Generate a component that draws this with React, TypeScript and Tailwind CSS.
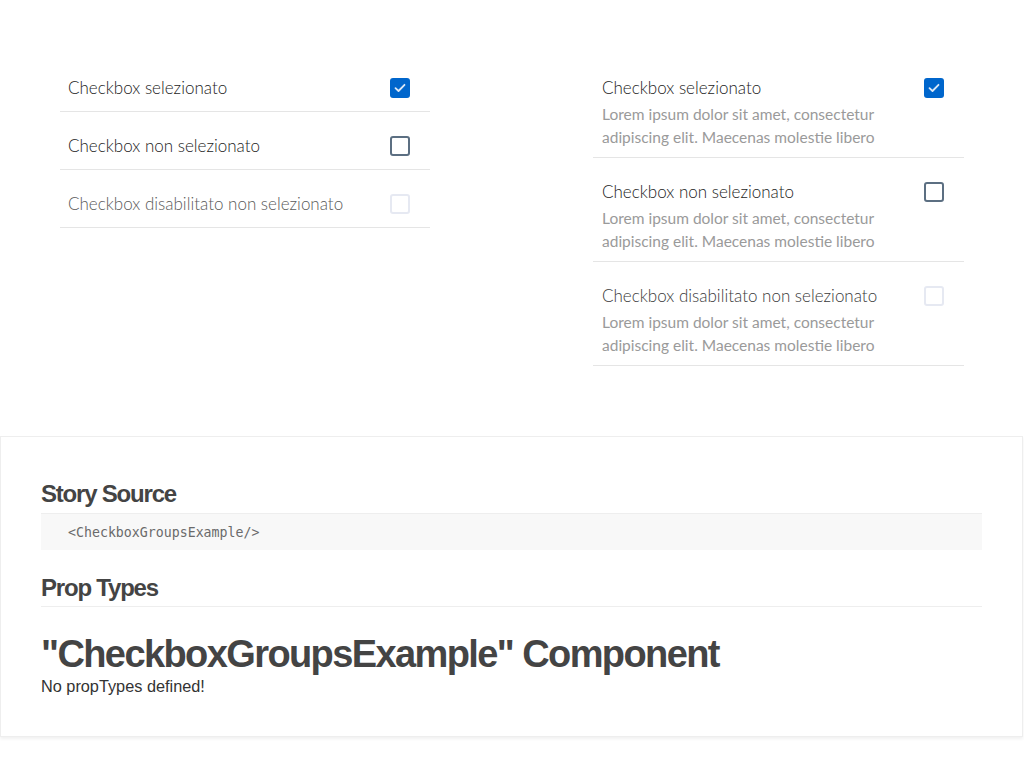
import React from "react";

const titleFont = { fontFamily: '"Lato", "Open Sans", sans-serif' };

function Box({ state }: { state: "checked" | "unchecked" | "disabled" }) {
  if (state === "checked") {
    return (
      <div className="w-5 h-5 rounded-[3px] bg-[#0066cc] flex items-center justify-center shrink-0">
        <svg width="12" height="10" viewBox="0 0 12 10" fill="none">
          <path d="M1.5 5.2 L4.5 8 L10.5 1.8" stroke="#dbe8f6" strokeWidth="1.8" strokeLinecap="round" strokeLinejoin="round" />
        </svg>
      </div>
    );
  }
  if (state === "unchecked") {
    return <div className="w-5 h-5 rounded-[3px] border-2 border-[#5c6f82] shrink-0" />;
  }
  return <div className="w-5 h-5 rounded-[3px] border-2 border-[#e6e9f2] shrink-0" />;
}

const rows: { label: string; state: "checked" | "unchecked" | "disabled" }[] = [
  { label: "Checkbox selezionato", state: "checked" },
  { label: "Checkbox non selezionato", state: "unchecked" },
  { label: "Checkbox disabilitato non selezionato", state: "disabled" },
];

export default function App() {
  return (
    <div className="w-[1024px] h-[768px] bg-white overflow-hidden">
      <div className="flex justify-between items-start pl-[60px] pr-[60px] pt-[54px] h-[436px]" style={titleFont}>
        <div className="w-[370px]">
          {rows.map((r) => (
            <div key={r.label} className="flex items-center justify-between pl-2 pr-5 h-[58px] pt-[11px] border-b border-[#e5e5e5]">
              <span className={`text-[17px] font-light ${r.state === "disabled" ? "text-[#5a5a5a]" : "text-[#1c1c1c]"}`}>{r.label}</span>
              <Box state={r.state} />
            </div>
          ))}
        </div>
        <div className="w-[371px]">
          {rows.map((r) => (
            <div key={r.label} className="flex justify-between pl-[9px] pr-5 pt-[22px] pb-[8px] border-b border-[#e5e5e5]">
              <div className="flex flex-col">
                <span className={`text-[17px] leading-[24px] font-light ${r.state === "disabled" ? "text-[#3a3a3a]" : "text-[#1c1c1c]"}`}>{r.label}</span>
                <span className="mt-[3px] text-[15.5px] leading-[23px] text-[#9a9a9a] w-[300px]">Lorem ipsum dolor sit amet, consectetur adipiscing elit. Maecenas molestie libero</span>
              </div>
              <div className="pt-[2px]">
                <Box state={r.state} />
              </div>
            </div>
          ))}
        </div>
      </div>
      <div className="border border-[#eeeeee] shadow-[0_2px_3px_rgba(0,0,0,0.06)] h-[301px] w-[1023px] px-10 pt-[41px]" style={{ fontFamily: '"Liberation Sans", Arial, sans-serif' }}>
        <h2 className="text-[24px] leading-[32px] font-bold text-[#444] tracking-[-1.2px] pb-[3px]">Story Source</h2>
        <div className="border-t border-[#eeeeee] bg-[#f8f8f8] h-[37px] flex items-center pl-[27px]">
          <span className="text-[13.25px] text-[#6a6a6a] pt-[1px]" style={{ fontFamily: '"DejaVu Sans Mono", monospace' }}>&lt;CheckboxGroupsExample/&gt;</span>
        </div>
        <h2 className="mt-[22px] text-[24px] leading-[32px] font-bold text-[#444] tracking-[-1.2px] pb-[2px]">Prop Types</h2>
        <div className="border-t border-[#eeeeee]" />
        <h1 className="mt-[25px] text-[38px] leading-[44px] font-bold text-[#444] tracking-[-1.6px]">"CheckboxGroupsExample" Component</h1>
        <p className="text-[16.3px] leading-[18px] text-[#333] mt-[1px]">No propTypes defined!</p>
      </div>
    </div>
  );
}
